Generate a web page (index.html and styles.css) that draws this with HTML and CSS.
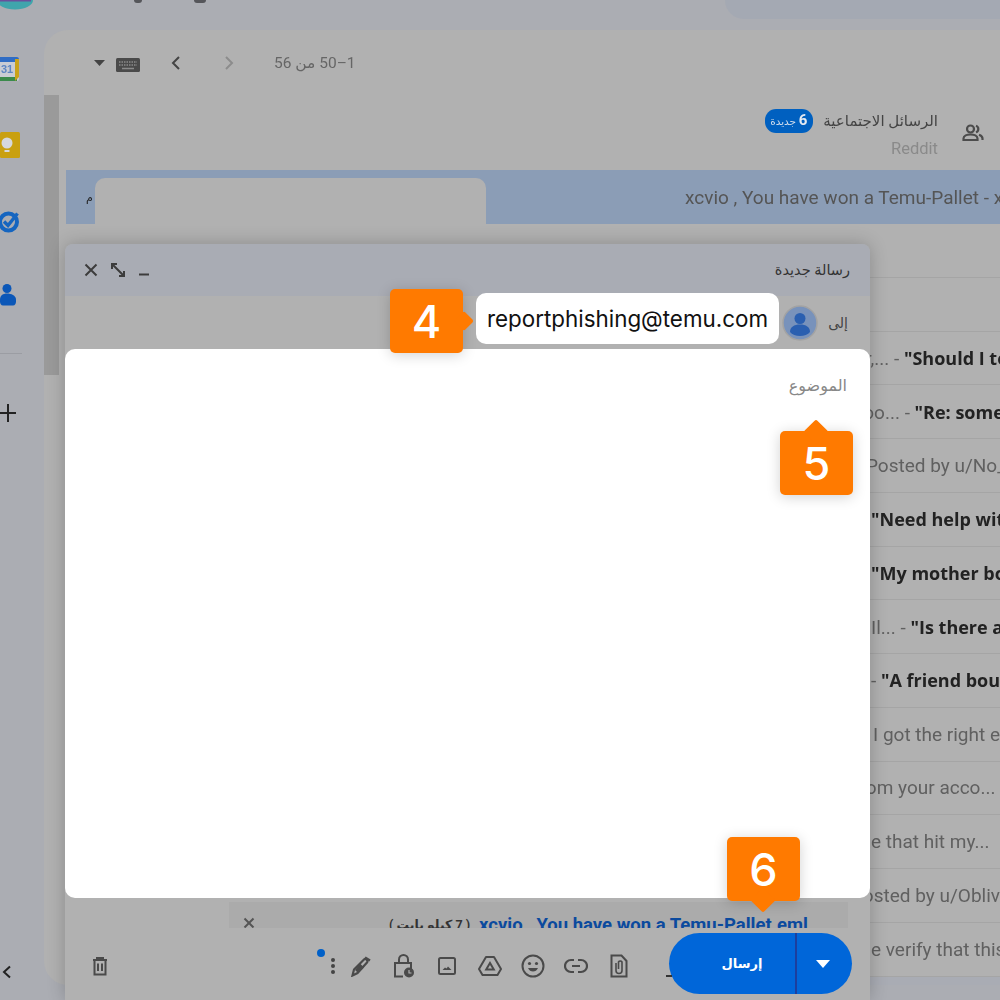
FILE: index.html
```html
<!DOCTYPE html>
<html lang="ar">
<head>
<meta charset="utf-8">
<title>Gmail</title>
<link rel="stylesheet" href="styles.css">
</head>
<body>
<div class="page">
  <div class="topbar">
    <svg class="avatar" width="44" height="30" viewBox="0 0 44 30"><path d="M-3 0a18 9.500 0 0 0 36 0z" fill="#3fa5ac"/><path d="M-1 0h32v1.500h-32z" fill="#6a4f9c"/></svg>
    <span class="topbit topbit-a"></span>
    <span class="topbit topbit-b"></span>
    <div class="search"></div>
  </div>
  <div class="shell">
    <nav class="rail">
      <svg class="railicon" width="24" height="24" viewBox="0 0 24 24"><rect x="2" y="0" width="20" height="24" rx="2" fill="#c9ccd4"/><path d="M2 0h18a2 2 0 0 1 2 2v3H2z" fill="#2f6cc4"/><path d="M2 20h18v4H2z" fill="#3b8a4c"/><path d="M18 2h4v18l-4 4z" fill="#c9a21a"/><text class="calday" x="4" y="16">31</text></svg>
      <svg class="railicon" width="24" height="26" viewBox="0 0 24 26"><rect x="3" y="0" width="20" height="26" rx="1.500" fill="#c9a010"/><circle cx="10" cy="11" r="5.500" fill="#d6d8dc"/><rect x="7.500" y="18" width="5" height="2" fill="#d6d8dc"/></svg>
      <svg class="railicon" width="24" height="24" viewBox="0 0 24 24"><circle cx="11.500" cy="13" r="8.500" fill="none" stroke="#1565c0" stroke-width="4"/><path d="M7 12.500l4 4 9.500-12" fill="none" stroke="#1565c0" stroke-width="3.400"/></svg>
      <svg class="railicon" width="24" height="24" viewBox="0 0 24 24"><circle cx="10" cy="4.500" r="4.500" fill="#0b57b8"/><path d="M3 15.500c0-4 3-6 7-6s9 2 9 6v2c0 2-1 4-3 4H6c-2 0-3-2-3-4z" fill="#0b57b8"/></svg>
      <div class="raildiv"></div>
      <svg class="railplus" width="24" height="24" viewBox="0 0 24 24"><path d="M9 3v18M0 12h17" stroke="#222" stroke-width="2" fill="none"/></svg>
      <svg class="railback" width="14" height="16" viewBox="0 0 14 16"><path d="M10 2.500L4 8l6 5.500" fill="none" stroke="#222" stroke-width="2"/></svg>
    </nav>
    <main class="mail">
      <div class="thumb"></div>
      <div class="toolbar">
        <svg width="12" height="7" viewBox="0 0 12 7"><path d="M0 0h11L5.500 6z" fill="#444"/></svg>
        <svg class="kbd" width="24" height="14" viewBox="0 0 24 14"><rect width="24" height="14" rx="1.500" fill="#4a4a4a"/><path d="M3 4h18M3 7h18" stroke="#8a8a8a" stroke-width="1.500" stroke-dasharray="1.500 1"/><path d="M6 10.500h12" stroke="#8a8a8a" stroke-width="1.500"/></svg>
        <svg class="prev" width="12" height="16" viewBox="0 0 12 16"><path d="M9 2L3 8l6 6" fill="none" stroke="#444" stroke-width="2"/></svg>
        <svg class="next" width="12" height="16" viewBox="0 0 12 16"><path d="M3 2l6 6-6 6" fill="none" stroke="#8c8c8c" stroke-width="2"/></svg>
        <span class="count" dir="rtl">1–50 من 56</span>
      </div>
      <div class="social" dir="rtl">
        <svg class="people" width="24" height="24" viewBox="0 0 24 24"><circle cx="9.500" cy="8" r="3.500" fill="none" stroke="#4c4c4c" stroke-width="2.200"/><path d="M2.500 19v-1.500c0-2.500 3.500-4 7-4s7 1.500 7 4V19z" fill="none" stroke="#4c4c4c" stroke-width="2.200"/><path d="M15 4.700a3.500 3.500 0 0 1 0 6.600M18 13.800c2 .7 3.500 2 3.500 3.700V19" fill="none" stroke="#4c4c4c" stroke-width="2.200"/></svg>
        <div class="socialtext">
          <div class="socialtitle"><span>الرسائل الاجتماعية</span><span class="badge"><b>6</b> جديدة</span></div>
          <div class="socialfrom" dir="ltr">Reddit</div>
        </div>
      </div>
      <div class="selected">
        <span class="selmark">م</span>
        <div class="redact"></div>
        <span class="seltext">xcvio , You have won a Temu-Pallet - xcvio</span>
      </div>
      <div class="rows">
        <div class="row"></div>
        <div class="row"></div>
        <div class="row"><span class="snip">Mother,... - <b>"Should I tell her about it</b></span></div>
        <div class="row"><span class="snip">Faceboo... - <b>"Re: something</b></span></div>
        <div class="row"><span class="snip">Posted by u/No_name</span></div>
        <div class="row"><span class="snip"><b>"Need help with this</b></span></div>
        <div class="row"><span class="snip"><b>"My mother bought it</b></span></div>
        <div class="row"><span class="snip">Il... - <b>"Is there a way</b></span></div>
        <div class="row"><span class="snip">- <b>"A friend bought</b></span></div>
        <div class="row"><span class="snip">I got the right email</span></div>
        <div class="row"><span class="snip">from your acco... - text</span></div>
        <div class="row"><span class="snip">e that hit my...</span></div>
        <div class="row"><span class="snip">Posted by u/Oblivion</span></div>
        <div class="row"><span class="snip">e verify that this is</span></div>
        <div class="row row-new"></div>
      </div>
    </main>
  </div>

  <section class="compose">
    <header class="chead" dir="rtl">
      <span class="ctitle">رسالة جديدة</span>
      <div class="cwin">
        <svg width="16" height="16" viewBox="0 0 16 16"><path d="M3 12.500h10" stroke="#3c3c3c" stroke-width="2"/></svg>
        <svg width="18" height="18" viewBox="0 0 18 18"><path d="M3 3l12 12M3 8V3h5M15 10v5h-5" fill="none" stroke="#3c3c3c" stroke-width="2"/></svg>
        <svg width="18" height="18" viewBox="0 0 18 18"><path d="M3.500 3.500l11 11M14.500 3.500l-11 11" fill="none" stroke="#3c3c3c" stroke-width="2"/></svg>
      </div>
    </header>
    <div class="cto" dir="rtl">
      <span class="tolabel">إلى</span>
      <svg class="toface" width="36" height="36" viewBox="0 0 36 36"><circle cx="18" cy="18" r="17" fill="#7892bb" stroke="#a3a3a3" stroke-width="1.500"/><circle cx="18" cy="13.500" r="5.500" fill="#2a5fb0"/><path d="M8 27c0-5 4-7.500 10-7.500S28 22 28 27c-2 2.500-6 4-10 4s-8-1.500-10-4z" fill="#2a5fb0"/></svg>
    </div>
    <div class="cbody" dir="rtl">
      <span class="subject">الموضوع</span>
    </div>
    <div class="attach" dir="rtl">
      <span class="attname" dir="ltr">xcvio , You have won a Temu-Pallet.eml</span>
      <span class="attsize">( 7 كيلو بايت )</span>
      <svg class="attx" width="12" height="12" viewBox="0 0 12 12"><path d="M1.500 1.500l9 9M10.500 1.500l-9 9" stroke="#555" stroke-width="2"/></svg>
    </div>
    <div class="actions">
      <svg class="trash" width="20" height="20" viewBox="0 0 20 20"><path d="M3 4h14M7 4V2h6v2M4.500 4v14.500h11V4M8 7.500v7.500M12 7.500v7.500" fill="none" stroke="#4a4a4a" stroke-width="2"/></svg>
      <div class="tools">
        <span class="dot"></span>
        <svg width="6" height="18" viewBox="0 0 6 18"><circle cx="3" cy="3" r="2" fill="#444"/><circle cx="3" cy="9" r="2" fill="#444"/><circle cx="3" cy="15" r="2" fill="#444"/></svg>
        <svg width="22" height="22" viewBox="0 0 22 22"><path d="M2.500 20.500l1.500-6L14 4.500c1.500-1.500 4.500 1 3 3L7.500 18z" fill="none" stroke="#4a4a4a" stroke-width="2.200"/><path d="M10 8.500l4 4L8 18l-3-3z" fill="#4a4a4a"/><path d="M15 2.500l5 3" stroke="#4a4a4a" stroke-width="2.500" fill="none"/></svg>
        <svg width="22" height="24" viewBox="0 0 22 24"><path d="M6 9V5.500a4.500 4.500 0 0 1 9 0V9" fill="none" stroke="#4a4a4a" stroke-width="2"/><path d="M10 22.500H2V9h16v6" fill="none" stroke="#4a4a4a" stroke-width="2"/><circle cx="16" cy="18.500" r="5" fill="#4a4a4a"/><path d="M16 16v3h2.500" fill="none" stroke="#b1b1b1" stroke-width="1.200"/></svg>
        <svg width="20" height="20" viewBox="0 0 20 20"><rect x="2" y="2" width="16" height="16" rx="1.500" fill="none" stroke="#4a4a4a" stroke-width="2"/><path d="M5.500 14l2.500-2.500 1.500 1 1.500-2 3.500 3.500z" fill="#4a4a4a"/></svg>
        <svg width="24" height="22" viewBox="0 0 24 22"><path d="M8 2h8l7 12-3.500 6h-15L1 14z" fill="none" stroke="#4a4a4a" stroke-width="2" stroke-linejoin="round"/><path d="M12 8l3.800 6.500H8.200z" fill="none" stroke="#4a4a4a" stroke-width="2"/></svg>
        <svg width="24" height="24" viewBox="0 0 24 24"><circle cx="12" cy="12" r="10.500" fill="none" stroke="#4a4a4a" stroke-width="2"/><circle cx="8.500" cy="9.500" r="1.600" fill="#4a4a4a"/><circle cx="15.500" cy="9.500" r="1.600" fill="#4a4a4a"/><path d="M7 14c1 2.500 3 3.500 5 3.500s4-1 5-3.500z" fill="#4a4a4a"/></svg>
        <svg width="24" height="16" viewBox="0 0 24 16"><path d="M10 14H7A6 6 0 0 1 7 2h3M14 2h3a6 6 0 0 1 0 12h-3M8 8h8" fill="none" stroke="#4a4a4a" stroke-width="2.200"/></svg>
        <svg width="20" height="24" viewBox="0 0 20 24"><path d="M2.500 1.500h10l5 5.500v15.500h-15z" fill="none" stroke="#4a4a4a" stroke-width="2"/><path d="M7 9v7.500a3 3 0 0 0 6 0V8a2 2 0 0 0-3.500 0v7" fill="none" stroke="#4a4a4a" stroke-width="1.600"/></svg>
      </div>
      <div class="send">
        <span class="sendlabel" dir="rtl">إرسال</span>
        <span class="sendmore"><svg width="14" height="8" viewBox="0 0 14 8"><path d="M0 0h14L7 8z" fill="#fff"/></svg></span>
      </div>
    </div>
  </section>

  <div class="callout c4">4</div>
  <div class="emailpill">reportphishing@temu.com</div>
  <div class="callout c5">5</div>
  <div class="callout c6">6</div>
</div>
</body>
</html>
```

FILE: styles.css
```css
html, body { margin: 0; padding: 0; }
body { background: #abadb3; font-family: Roboto, "DejaVu Sans", sans-serif; color: #555; }
.page { position: relative; width: 1000px; height: 1000px; overflow: hidden; background: #abadb3; }

.topbar { display: flex; height: 30px; }
.avatar { display: block; flex: none; }
.topbit { height: 3px; background: #55565a; border-radius: 0 0 4px 4px; }
.topbit-a { width: 8px; margin-left: 90px; }
.topbit-b { width: 12px; margin-left: 52px; }
.search { width: 275px; height: 19px; margin-left: auto; background: #a4a9b3; border-radius: 0 0 0 22px; }

.shell { display: flex; height: 955px; filter: blur(.4px); }
.rail { width: 44px; flex: none; display: flex; flex-direction: column; padding-top: 27px; }
.railicon { display: block; margin-left: -3px; margin-bottom: 51px; }
.calday { font: 700 11px "Liberation Sans", sans-serif; fill: #5d86c4; }
.raildiv { width: 22px; height: 1px; background: #9b9da3; margin-top: -6px; }
.railplus { display: block; margin: 47px 0 0 -1px; }
.railback { display: block; margin-top: auto; margin-bottom: 5px; }

.mail { position: relative; flex: 1; background: #b1b1b1; border-radius: 24px 0 0 24px; padding-left: 22px; overflow: hidden; }
.thumb { position: absolute; left: 0; top: 65px; width: 15px; height: 280px; background: #9a9a9a; }

.toolbar { display: flex; align-items: center; height: 66px; padding-left: 28px; }
.kbd { margin: 4px 0 0 10px; }
.prev { margin-left: 30px; }
.next { margin-left: 41px; }
.count { margin-left: 39px; font-size: 15.500px; color: #666; }

.social { display: flex; align-items: center; height: 74px; padding-right: 15px; }
.people { margin-left: 23px; }
.socialtitle { display: flex; align-items: center; gap: 10px; font-size: 15px; color: #444; }
.badge { background: #0060c0; color: #cfdcec; font-size: 10.500px; padding: 1px 6px 1px 5px; border-radius: 11px; line-height: 20px; }
.badge b { font-size: 15px; color: #e4eaf2; }
.socialfrom { text-align: right; font-size: 16.500px; color: #8a8a8a; margin-top: 6px; }

.selected { position: relative; display: flex; align-items: center; height: 54px; background: #8b9db6; white-space: nowrap; overflow: hidden; font-size: 19px; }
.selmark { margin-left: 20px; font-size: 11px; color: #222; }
.seltext { position: absolute; left: 619px; color: #555; }
.redact { position: absolute; left: 29px; top: 8px; width: 391px; height: 60px; background: #b1b1b1; border-radius: 10px; }

.rows { display: flex; flex-direction: column; }
.row { display: flex; align-items: center; height: 53.750px; box-sizing: border-box; border-bottom: 1px solid #a5a5a5; white-space: nowrap; font-size: 19px; color: #606060; }
.row b { font-family: "Open Sans", sans-serif; font-size: 18px; font-weight: 700; color: #222; }
.row-new { background: #a9acb4; }
.row:nth-child(3) .snip { margin-left: 745px; }
.row:nth-child(4) .snip { margin-left: 746px; }
.row:nth-child(5) .snip { margin-left: 800px; }
.row:nth-child(6) .snip { margin-left: 805px; }
.row:nth-child(7) .snip { margin-left: 805px; }
.row:nth-child(8) .snip { margin-left: 805px; }
.row:nth-child(9) .snip { margin-left: 805px; }
.row:nth-child(10) .snip { margin-left: 807px; }
.row:nth-child(11) .snip { margin-left: 787px; }
.row:nth-child(12) .snip { margin-left: 805px; }
.row:nth-child(13) .snip { margin-left: 785px; }
.row:nth-child(14) .snip { margin-left: 805px; }

.compose { position: absolute; left: 65px; top: 244px; width: 805px; height: 756px; display: flex; flex-direction: column; background: #b1b1b1; box-shadow: 0 0 18px rgba(0, 0, 0, .22); border-radius: 8px 8px 0 0; }
.chead { display: flex; align-items: center; justify-content: space-between; height: 52px; padding: 0 20px 0 17px; background: #a9acb4; border-radius: 8px 8px 0 0; }
.ctitle { font-size: 14.500px; color: #333; }
.cwin { display: flex; gap: 9px; align-items: center; }

.cto { display: flex; align-items: center; gap: 10px; height: 53px; padding-right: 22px; }
.tolabel { font-size: 14px; color: #444; }
.toface { display: block; }

.cbody { height: 549px; background: #fff; border-radius: 10px; padding: 27px 23px 0; box-sizing: border-box; }
.subject { font-size: 16px; color: #888; }

.attach { display: flex; align-items: flex-start; gap: 9px; height: 26px; margin: 4px 22px 0 164px; padding: 12px 40px 0 14px; box-sizing: border-box; background: #ababab; overflow: hidden; font-size: 18.500px; font-weight: 700; line-height: 22px; white-space: nowrap; }
.attname { color: #0b4a9e; }
.attsize { color: #333; font-size: 12.500px; }
.attx { margin-right: auto; margin-top: 3px; }

.actions { display: flex; align-items: flex-start; padding: 5px 18px 0 25px; }
.trash { margin-top: 23px; }
.tools { position: relative; display: grid; grid-template-columns: 12px repeat(7, 43px); align-items: center; justify-items: center; margin: 21px 29px 0 auto; }
.tools::after { content: ""; position: absolute; right: -32px; top: 21px; width: 6px; height: 2px; background: #333; }
.dot { position: absolute; left: -10px; top: -5px; width: 8px; height: 8px; border-radius: 50%; background: #0060c8; }
.send { display: flex; width: 183px; height: 61px; background: #0066d9; border-radius: 31px; color: #fff; font-size: 13px; font-weight: 700; }
.sendlabel { display: flex; align-items: center; justify-content: center; width: 128px; padding-left: 20px; box-sizing: border-box; border-right: 2px solid #1c3f9e; }
.sendmore { display: flex; align-items: center; justify-content: center; flex: 1; padding-right: 4px; }

.callout { position: absolute; display: flex; align-items: center; justify-content: center; width: 73px; height: 64px; background: #ff7a00; color: #fff; border-radius: 5px; font-family: Inter, sans-serif; font-weight: 500; font-size: 45px; box-shadow: 0 2px 14px rgba(0, 0, 0, .18); }
.callout::after { content: ""; position: absolute; width: 18px; height: 18px; background: #ff7a00; transform: rotate(45deg); border-radius: 2px; }
.c4 { left: 390px; top: 289px; }
.c4::after { right: -8px; top: 25px; width: 14px; height: 14px; }
.c5 { left: 780px; top: 431px; }
.c5::after { top: -8px; left: 27px; }
.c6 { left: 727px; top: 837px; }
.c6::after { bottom: -8px; left: 27px; }
.emailpill { position: absolute; left: 476px; top: 293px; width: 303px; height: 51px; display: flex; align-items: center; justify-content: center; background: #fff; border-radius: 10px; font-family: Inter, sans-serif; font-size: 22.400px; color: #111; }
```
